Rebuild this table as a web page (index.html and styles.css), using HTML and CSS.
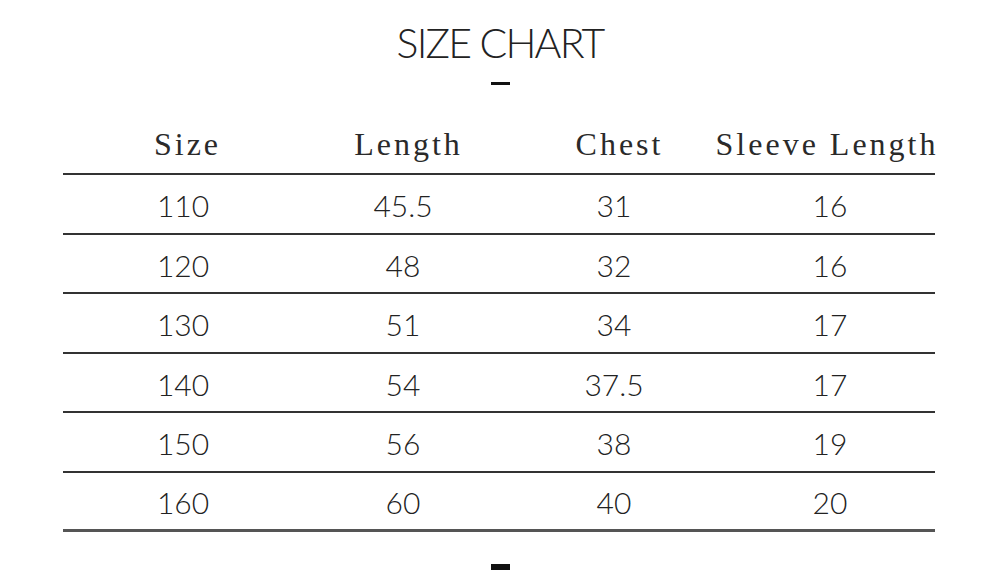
FILE: index.html
```html
<!DOCTYPE html>
<html>
<head>
<meta charset="utf-8">
<link rel="stylesheet" href="styles.css">
</head>
<body>
<div class="page">
  <h1 class="title">SIZE CHART</h1>
  <div class="dash"></div>
  <div class="table">
    <div class="row head"><span>Size</span><span>Length</span><span>Chest</span><span>Sleeve Length</span></div>
    <div class="row"><span>110</span><span>45.5</span><span>31</span><span>16</span></div>
    <div class="row"><span>120</span><span>48</span><span>32</span><span>16</span></div>
    <div class="row"><span>130</span><span>51</span><span>34</span><span>17</span></div>
    <div class="row"><span>140</span><span>54</span><span>37.5</span><span>17</span></div>
    <div class="row"><span>150</span><span>56</span><span>38</span><span>19</span></div>
    <div class="row last"><span>160</span><span>60</span><span>40</span><span>20</span></div>
  </div>
  <div class="dash bottom"></div>
</div>
</body>
</html>
```
FILE: styles.css
```css
html, body {
  margin: 0;
  padding: 0;
  background: #fff;
}
.page {
  width: 1000px;
  height: 570px;
  overflow: hidden;
  display: flex;
  flex-direction: column;
  align-items: center;
  color: #222;
}
.title {
  margin: 22px 0 0;
  font-family: Lato, "Open Sans", sans-serif;
  font-weight: 300;
  font-size: 41px;
  line-height: 42px;
  letter-spacing: -1.8px;
  color: #222;
}
.dash {
  width: 19px;
  height: 4px;
  background: #111;
  margin-top: 18px;
}
.table {
  margin-top: 31px;
  width: 872px;
  align-self: flex-start;
  margin-left: 63px;
}
.row {
  display: grid;
  grid-template-columns: 240px 200px 222px 210px;
  height: 57.5px;
  align-items: center;
  border-bottom: 2px solid #333;
  font-family: Lato, "Open Sans", sans-serif;
  font-weight: 300;
  font-size: 30px;
  color: #222;
}
.row span {
  justify-self: center;
  white-space: nowrap;
  padding-top: 3px;
}
.row.head {
  grid-template-columns: 249px 193px 229px 186px;
  height: 57px;
  font-family: "Liberation Serif", serif;
  font-weight: 400;
  font-size: 32px;
  letter-spacing: 3px;
  color: #2a2a2a;
}
.row.head span {
  padding-top: 0;
}
.row.last {
  border-bottom: 3px solid #555;
  height: 56.5px;
}
.dash.bottom {
  margin-top: 32px;
  height: 8px;
}
```
